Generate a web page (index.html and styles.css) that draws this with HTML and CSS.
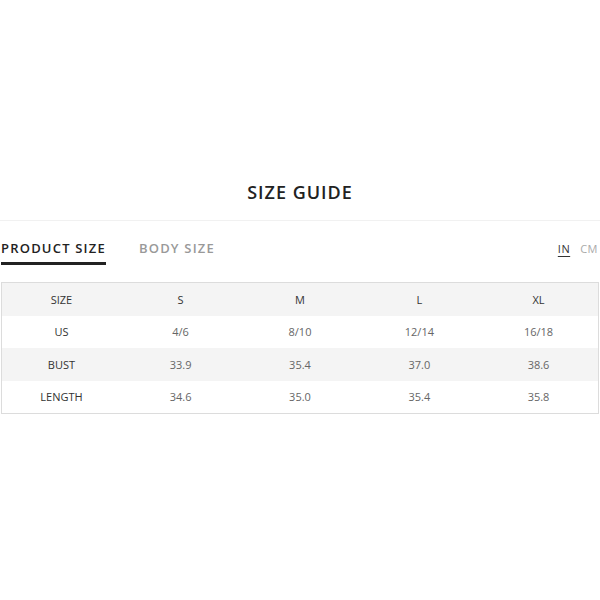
FILE: index.html
```html
<!DOCTYPE html>
<html>
<head>
<meta charset="utf-8">
<link rel="stylesheet" href="styles.css">
</head>
<body>
<div class="guide">
  <h1 class="title">SIZE GUIDE</h1>
  <div class="tabs">
    <div class="tab-list">
      <span class="tab active">PRODUCT SIZE</span>
      <span class="tab">BODY SIZE</span>
    </div>
    <div class="units">
      <span class="unit active">IN</span>
      <span class="unit">CM</span>
    </div>
  </div>
  <table class="table">
    <tr class="shade"><td class="label">SIZE</td><td class="label">S</td><td class="label">M</td><td class="label">L</td><td class="label">XL</td></tr>
    <tr><td class="label">US</td><td>4/6</td><td>8/10</td><td>12/14</td><td>16/18</td></tr>
    <tr class="shade"><td class="label">BUST</td><td>33.9</td><td>35.4</td><td>37.0</td><td>38.6</td></tr>
    <tr><td class="label">LENGTH</td><td>34.6</td><td>35.0</td><td>35.4</td><td>35.8</td></tr>
  </table>
</div>
</body>
</html>
```
FILE: styles.css
```css
html, body {
  margin: 0;
  padding: 0;
  background: #fff;
}
.guide {
  padding-top: 178px;
  font-family: "Open Sans", sans-serif;
}
.title {
  margin: 0;
  text-align: center;
  font-size: 18px;
  font-weight: 600;
  letter-spacing: 1px;
  color: #222;
  line-height: 28px;
  padding-bottom: 14px;
  border-bottom: 1px solid #f1f1f1;
}
.tabs {
  display: flex;
  justify-content: space-between;
  align-items: flex-start;
  padding: 18px 2px 0 1px;
  height: 43px;
}
.tab-list {
  display: flex;
  gap: 33px;
}
.tab {
  font-size: 13px;
  font-weight: 600;
  letter-spacing: 1.2px;
  color: #999;
  line-height: 18px;
  padding-bottom: 5px;
  border-bottom: 3px solid transparent;
}
.tab.active {
  color: #222;
  border-bottom-color: #222;
}
.units {
  display: flex;
  gap: 10px;
  padding-top: 2px;
}
.unit {
  font-size: 11px;
  letter-spacing: 0.5px;
  color: #aaa;
  line-height: 15px;
}
.unit.active {
  color: #333;
  text-decoration: underline;
  text-underline-offset: 3px;
}
.table {
  width: 598px;
  margin-left: 1px;
  border-collapse: collapse;
  border: 1px solid #dcdcdc;
  table-layout: fixed;
}
.table td {
  height: 32.5px;
  padding: 0;
  text-align: center;
  font-size: 11px;
  color: #666;
}
.table td.label {
  color: #333;
}
.shade td {
  background: #f4f4f4;
}
```
